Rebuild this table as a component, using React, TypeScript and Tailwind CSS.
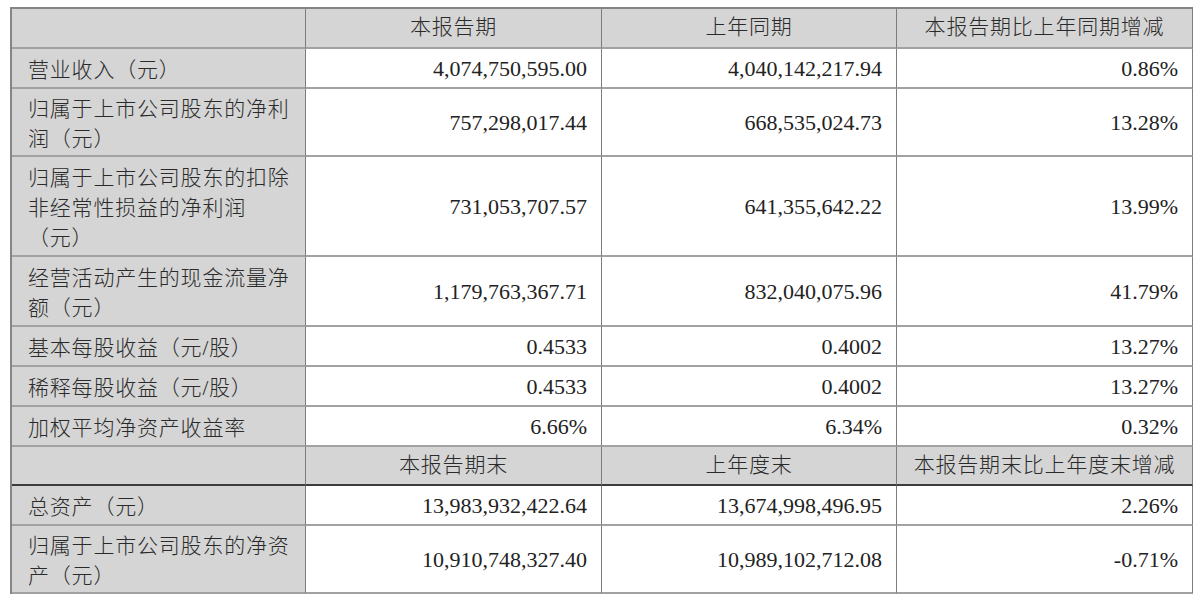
const FONT = '"Liberation Serif", "Noto Sans CJK SC", serif';

type Row =
  | { kind: "head"; cols: string[]; h: string; bottom?: string }
  | { kind: "data"; label: string[]; values: string[]; h: string; bottom?: string };

const rows: Row[] = [
  { kind: "head", cols: ["", "本报告期", "上年同期", "本报告期比上年同期增减"], h: "h-[40px]" },
  { kind: "data", label: ["营业收入（元）"], values: ["4,074,750,595.00", "4,040,142,217.94", "0.86%"], h: "h-[40px]" },
  {
    kind: "data",
    label: ["归属于上市公司股东的净利", "润（元）"],
    values: ["757,298,017.44", "668,535,024.73", "13.28%"],
    h: "h-[68px]",
  },
  {
    kind: "data",
    label: ["归属于上市公司股东的扣除", "非经常性损益的净利润", "（元）"],
    values: ["731,053,707.57", "641,355,642.22", "13.99%"],
    h: "h-[100px]",
  },
  {
    kind: "data",
    label: ["经营活动产生的现金流量净", "额（元）"],
    values: ["1,179,763,367.71", "832,040,075.96", "41.79%"],
    h: "h-[70px]",
  },
  { kind: "data", label: ["基本每股收益（元/股）"], values: ["0.4533", "0.4002", "13.27%"], h: "h-[40px]" },
  { kind: "data", label: ["稀释每股收益（元/股）"], values: ["0.4533", "0.4002", "13.27%"], h: "h-[40px]" },
  { kind: "data", label: ["加权平均净资产收益率"], values: ["6.66%", "6.34%", "0.32%"], h: "h-[40px]" },
  {
    kind: "head",
    cols: ["", "本报告期末", "上年度末", "本报告期末比上年度末增减"],
    h: "h-[39px]",
    bottom: "border-b-2 border-b-[#3c3c3c]",
  },
  { kind: "data", label: ["总资产（元）"], values: ["13,983,932,422.64", "13,674,998,496.95", "2.26%"], h: "h-[40px]" },
  {
    kind: "data",
    label: ["归属于上市公司股东的净资", "产（元）"],
    values: ["10,910,748,327.40", "10,989,102,712.08", "-0.71%"],
    h: "h-[68px]",
  },
];

const COLS = "grid grid-cols-[294px_296px_295px_296px]";

export default function App() {
  return (
    <div className="h-[604px] w-[1200px] bg-white" style={{ fontFamily: FONT }}>
      <div className="pt-[7px] pl-[10px]">
        <div className="w-[1183px] border-l-2 border-t-2 border-[#858585] text-[#222]">
          {rows.map((row, i) => {
            const bottom = row.bottom ?? "border-b-2 border-b-[#a2a2a2]";
            if (row.kind === "head") {
              return (
                <div key={i} className={COLS}>
                  {row.cols.map((c, j) => (
                    <div
                      key={j}
                      className={`flex ${row.h} items-center justify-center border-r border-r-[#7c7c7c] bg-[#d5d5d5] text-[21px] font-light tracking-[0.8px] text-[#2a2a2a] ${bottom}`}
                    >
                      {c}
                    </div>
                  ))}
                </div>
              );
            }
            return (
              <div key={i} className={COLS}>
                <div
                  className={`flex ${row.h} flex-col justify-center border-r border-r-[#7c7c7c] bg-[#d5d5d5] pl-4 pt-1 text-[21px] leading-[30px] font-light tracking-[0.8px] text-[#2a2a2a] ${bottom}`}
                >
                  {row.label.map((l, k) => (
                    <span key={k} className="whitespace-nowrap">
                      {l}
                    </span>
                  ))}
                </div>
                {row.values.map((v, j) => (
                  <div
                    key={j}
                    className={`flex ${row.h} items-center justify-end border-r border-r-[#7c7c7c] bg-white pr-[14px] text-[22px] ${bottom}`}
                  >
                    {v}
                  </div>
                ))}
              </div>
            );
          })}
        </div>
      </div>
    </div>
  );
}
